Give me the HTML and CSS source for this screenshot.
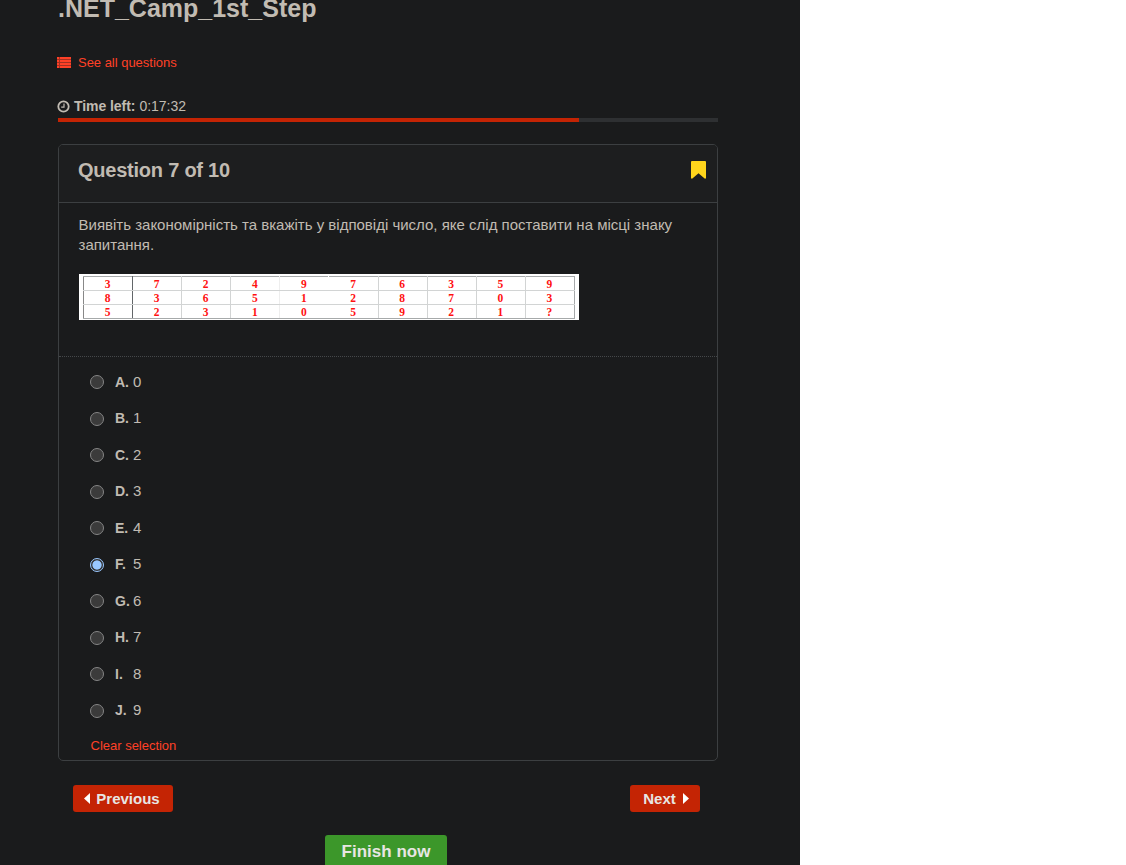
FILE: index.html
```
<!DOCTYPE html>
<html lang="uk">
<head>
<meta charset="utf-8">
<title>.NET_Camp_1st_Step</title>
<link rel="stylesheet" href="styles.css">
</head>
<body>
<main class="page">
  <h1 class="title">.NET_Camp_1st_Step</h1>
  <a class="all-questions">
    <svg width="14" height="11" viewBox="0 0 14 11"><path fill="currentColor" opacity=".6" d="M0 0h14v11H0z"/><path fill="currentColor" d="M0 0h2v2H0zM3 0h11v2H3zM0 3h2v2H0zM3 3h11v2H3zM0 6h2v2H0zM3 6h11v2H3zM0 9h2v2H0zM3 9h11v2H3z"/></svg>
    <span>See all questions</span>
  </a>
  <div class="timer">
    <svg width="13" height="13" viewBox="0 0 13 13" fill="none" stroke="currentColor"><circle cx="6.5" cy="6.5" r="5.2" stroke-width="1.8"/><path d="M7 3.5v3.7H4.2" stroke-width="1.2"/></svg>
    <b>Time left:</b><span>0:17:32</span>
  </div>
  <div class="progress"><div class="progress-fill" style="width:79%"></div></div>

  <section class="card">
    <header class="card-head">
      <h2>Question 7 of 10</h2>
      <svg width="15" height="18" viewBox="0 0 15 18"><path fill="#ffd51c" d="M1 0h13q1 0 1 1v16q-.4 1-1.400.5L7.500 12.300 1.400 17.500Q.4 18 0 17V1Q0 0 1 0z"/></svg>
    </header>
    <div class="question">
      <p>Виявіть закономірність та вкажіть у відповіді число, яке слід поставити на місці знаку запитання.</p>
      <div class="sheet">
        <table class="numbers">
          <tr><td>3</td><td>7</td><td>2</td><td>4</td><td>9</td><td>7</td><td>6</td><td>3</td><td>5</td><td>9</td></tr>
          <tr><td>8</td><td>3</td><td>6</td><td>5</td><td>1</td><td>2</td><td>8</td><td>7</td><td>0</td><td>3</td></tr>
          <tr><td>5</td><td>2</td><td>3</td><td>1</td><td>0</td><td>5</td><td>9</td><td>2</td><td>1</td><td>?</td></tr>
        </table>
      </div>
    </div>
    <div class="answers">
      <div class="option"><i class="radio"></i><b>A.</b><span>0</span></div>
      <div class="option"><i class="radio"></i><b>B.</b><span>1</span></div>
      <div class="option"><i class="radio"></i><b>C.</b><span>2</span></div>
      <div class="option"><i class="radio"></i><b>D.</b><span>3</span></div>
      <div class="option"><i class="radio"></i><b>E.</b><span>4</span></div>
      <div class="option"><i class="radio checked"></i><b>F.</b><span>5</span></div>
      <div class="option"><i class="radio"></i><b>G.</b><span>6</span></div>
      <div class="option"><i class="radio"></i><b>H.</b><span>7</span></div>
      <div class="option"><i class="radio"></i><b>I.</b><span>8</span></div>
      <div class="option"><i class="radio"></i><b>J.</b><span>9</span></div>
      <a class="clear">Clear selection</a>
    </div>
  </section>

  <nav class="pager">
    <button class="btn prev"><svg width="6" height="11" viewBox="0 0 6 11"><path fill="#fff" d="M6 0v11L0 5.500z"/></svg>Previous</button>
    <button class="btn next">Next<svg width="6" height="11" viewBox="0 0 6 11"><path fill="#fff" d="M0 0v11l6-5.500z"/></svg></button>
  </nav>
  <button class="btn finish">Finish now</button>
</main>
</body>
</html>
```
FILE: styles.css
```
* { box-sizing: border-box; }
html { background: #fff; overflow: hidden; }
body {
  margin: 0;
  height: 865px;
  overflow: hidden;
  font-family: "Liberation Sans", Arial, sans-serif;
  color: #c1bbb2;
}
.page {
  display: flex;
  flex-direction: column;
  width: 800px;
  height: 865px;
  padding: 0 82px 0 58px;
  overflow: hidden;
  background: #1a1b1c;
}
.page > * { flex-shrink: 0; }
.title {
  height: 54px;
  margin: 0;
  margin-top: -6px;
  font-size: 25px;
  line-height: 28px;
}
.all-questions {
  display: flex;
  align-items: center;
  gap: 7px;
  height: 28px;
  margin-left: -1px;
  font-size: 13px;
  letter-spacing: -.02px;
  color: #ff4127;
}
.timer {
  display: flex;
  align-items: center;
  gap: 4px;
  height: 20px;
  margin: 20px 0 0 -1px;
  font-size: 14px;
}
.timer b { letter-spacing: -.06px; }
.progress {
  height: 4px;
  margin-top: 2px;
  background: #2e3032;
}
.progress-fill { height: 4px; background: #c42404; }
.card {
  height: 617px;
  margin-top: 22px;
  border: 1px solid #3c3f41;
  border-radius: 5px;
}
.card-head {
  display: flex;
  justify-content: space-between;
  height: 58px;
  padding: 13px 11px 0 19px;
  border-bottom: 1px solid #3c3f41;
  border-radius: 4px 4px 0 0;
  background: #1d1e1f;
}
.card-head h2 {
  margin: 0;
  font-size: 20px;
  line-height: 24px;
  letter-spacing: -.23px;
}
.card-head svg { margin-top: 3px; }
.question {
  height: 154px;
  padding: 12px 19px 0 20px;
  border-bottom: 1px dotted #45484a;
}
.question p {
  margin: 0 0 0 -.5px;
  font-size: 15px;
  line-height: 20px;
}
.sheet {
  width: 500px;
  height: 46px;
  margin-top: 19px;
  padding: 2px 4px 1px;
  background: #fff;
}
.numbers {
  width: 492px;
  height: 43px;
  table-layout: fixed;
  border-collapse: collapse;
  border: 1px solid #a6a9aa;
}
.numbers td {
  height: 14px;
  padding: 0 1px 0 0;
  border: 1px solid #d2d4d4;
  font: bold 11.5px/12px "Liberation Serif", "Times New Roman", serif;
  color: #f11;
  text-align: center;
}
.numbers td:first-child { border-right-color: #626669; border-left-color: #888; }
.numbers td:last-child { border-right-color: #a6a9aa; }
.numbers td:nth-child(4) { border-right-color: #eee; }
.numbers td:nth-child(5) { border-right-color: #fff; }
.numbers tr:first-child td { border-top-color: #a6a9aa; }
.numbers tr:last-child td { border-bottom-color: #a6a9aa; }
.answers { padding: 7px 0 0 31px; }
.option {
  display: flex;
  align-items: center;
  height: 36.5px;
  font-size: 15px;
}
.option b { width: 18px; padding-bottom: 1px; font-size: 14px; }
.option span { padding-bottom: 2px; }
.radio {
  width: 14px;
  height: 14px;
  margin-right: 11px;
  border: 1px solid #858585;
  border-radius: 50%;
  background: #3b3b3b;
}
.radio.checked {
  border-color: #99c8ff;
  background: radial-gradient(circle, #99c8ff 4.200px, #333 5px);
}
.clear {
  display: block;
  margin-top: 7px;
  font-size: 13px;
  line-height: 20px;
  letter-spacing: -.02px;
  margin-left: .6px;
  color: #ff4127;
}
.pager {
  display: flex;
  justify-content: space-between;
  margin-top: 24px;
  padding: 0 18px 0 15px;
}
.btn {
  display: flex;
  align-items: center;
  justify-content: center;
  height: 27px;
  padding: 0;
  border: 0;
  border-radius: 3px;
  font: bold 15px "Liberation Sans", Arial, sans-serif;
  color: #e8e6e3;
  background: #c42404;
}
.prev { width: 100px; gap: 6px; padding-right: 2px; }
.next { width: 70px; gap: 7px; padding-left: 2px; }
.finish {
  align-self: center;
  width: 122px;
  height: 34px;
  margin-top: 23px;
  margin-right: 4px;
  font-size: 17px;
  background: #3c972a;
}
```
